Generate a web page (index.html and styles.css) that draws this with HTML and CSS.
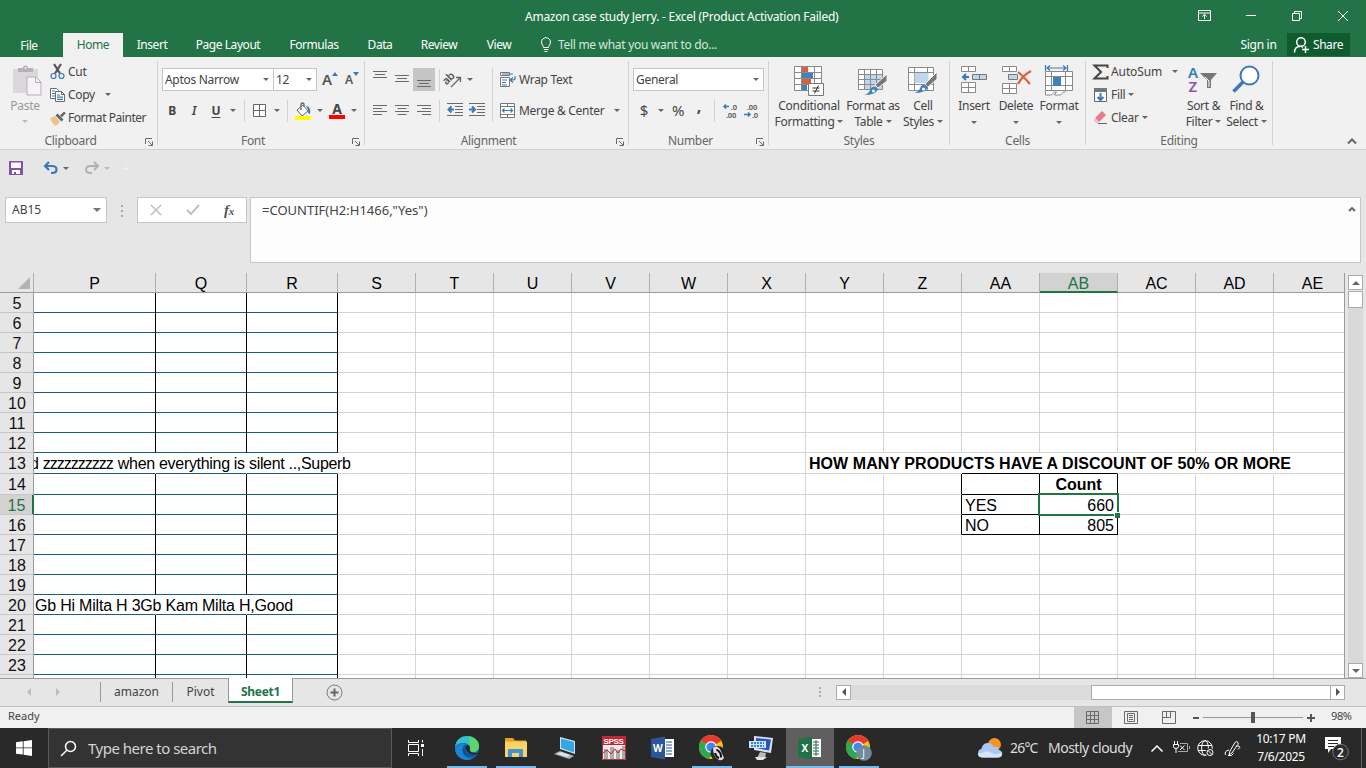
FILE: index.html
```html
<!DOCTYPE html>
<html lang="en">
<head>
<meta charset="utf-8">
<title>Amazon case study Jerry. - Excel</title>
<link rel="stylesheet" href="styles.css">
</head>
<body>
<header class="titlebar">
  <div class="doc-title">Amazon case study Jerry. - Excel (Product Activation Failed)</div>
  <div class="win-buttons">
    <svg width="14" height="12" viewBox="0 0 14 12"><path d="M.5.5h12v10H.5zM.5 3h12M6.500 9V4.500M4.200 6.500l2.300-2.200 2.300 2.200" class="ln-white"/></svg>
    <svg width="12" height="12" viewBox="0 0 12 12"><path d="M0 5.500h10" class="ln-white"/></svg>
    <svg width="12" height="12" viewBox="0 0 12 12"><path d="M1.500 3.500h7v7h-7zM3.500 3.500v-2h7v7h-2" class="ln-white"/></svg>
    <svg width="12" height="12" viewBox="0 0 12 12"><path d="M1 1l10 10M11 1L1 11" class="ln-white"/></svg>
  </div>
</header>
<nav class="tabs">
  <span class="t-file">File</span><span class="t-home">Home</span><span class="t-insert">Insert</span><span class="t-page">Page Layout</span><span class="t-formulas">Formulas</span><span class="t-data">Data</span><span class="t-review">Review</span><span class="t-view">View</span>
  <svg class="bulb" width="12" height="16" viewBox="0 0 12 16"><path d="M3.500 10.500C3.500 8.500 1.500 8 1.500 5a4.500 4.300 0 0 1 9 0c0 3-2 3.500-2 5.500zM3.800 12.500h4.500M4.500 14.500h3" class="ln-white"/></svg>
  <span class="tell">Tell me what you want to do...</span>
  <span class="signin">Sign in</span>
  <span class="share"><svg width="17" height="18" viewBox="0 0 17 18"><path d="M1.500 16.500c0-4 2.500-6 5.500-6M8 10.500c1 0 1.500.3 2 .8" class="ln-white w15"/><circle cx="8" cy="6" r="4.300" class="ln-white w15"/><path d="M12.500 10v7M9 13.500h7" class="ln-white w15"/></svg>Share</span>
</nav>

<section class="ribbon">
  <div class="group g-clip">
    <div class="body">
      <div class="paste">
        <svg width="30" height="31" viewBox="0 0 30 31"><path d="M1 4h25v24H1z" fill="#dcd7dc"/><path d="M6 7V3h5a2.500 2.500 0 0 1 5 0h5v4z" fill="#b3b3b3"/><circle cx="13.500" cy="3" r="1" fill="#f1f1f1"/><path d="M15 12h9l5 5v13H15z" fill="#f6f2f8" stroke="#b3b3b3"/><path d="M23.500 12v5.500H29" fill="none" stroke="#b3b3b3"/></svg>
        <span class="dim">Paste</span><i class="dd light"></i>
      </div>
      <div class="clip-list">
        <div><svg width="16" height="16" viewBox="0 0 16 16"><path d="M4 0l6 9.500M11 0L5 9.500" stroke="#555" stroke-width="2.200"/><circle cx="3.500" cy="12" r="2.500" class="ln-blue"/><circle cx="11.500" cy="12" r="2.500" class="ln-blue"/></svg><span>Cut</span></div>
        <div><svg width="16" height="16" viewBox="0 0 16 16"><path d="M.5 1.500h6l2 2v8h-8z" fill="#fff" stroke="#6a6a6a"/><path d="M2 4h3M2 6.500h3M2 9h3" class="ln-blue"/><path d="M5.500 4.500h6l3 3v7h-9z" fill="#fff" stroke="#6a6a6a"/><path d="M11.500 4.500v3h3" fill="none" stroke="#6a6a6a"/><path d="M7 8h3M7 10.200h6M7 12.400h6" class="ln-blue"/></svg><span>Copy</span><i class="dd gap10"></i></div>
        <div><svg width="16" height="16" viewBox="0 0 16 16"><path d="M0 8l5-2 5 6-4 4q-4-2-6-8z" fill="#edc487"/><path d="M5.500 5.500l2-2 6 6-2 2z" fill="#666"/><path d="M10 5.500l4-4 1.800 1.800-4 4z" fill="#666"/></svg><span class="tight">Format Painter</span></div>
      </div>
    </div>
    <div class="label"><span>Clipboard</span><svg class="launch" width="9" height="9" viewBox="0 0 9 9"><path d="M.5 6V.5H7M3 3l4 4M7.500 3.500v4h-4" class="ln-gray"/></svg></div>
  </div>
  <i class="sep"></i>
  <div class="group g-font">
    <div class="body rows">
      <div class="font-top">
        <span class="combo">Aptos Narrow<i class="dd"></i></span><span class="combo second">12<i class="dd"></i></span>
        <span class="grow">A<svg width="6" height="4" viewBox="0 0 6 4"><path d="M0 4l3-4 3 4z" fill="#3c78b8"/></svg></span>
        <span class="shrink">A<svg width="6" height="4" viewBox="0 0 6 4"><path d="M0 0l3 4 3-4z" fill="#3c78b8"/></svg></span>
      </div>
      <div class="font-bot">
        <b>B</b><b class="ital">I</b><b class="und">U</b><i class="dd"></i><i class="vs"></i>
        <svg width="14" height="14" viewBox="0 0 14 14"><path d="M.5.5h12v12H.5zM6.500.5v12M.5 6.500h12" fill="#fff" stroke="#666"/></svg><i class="dd"></i><i class="vs"></i>
        <svg width="18" height="18" viewBox="0 0 18 18"><path d="M3 8l6-5 5 6-6 5z" fill="#fff" stroke="#666"/><path d="M7 8V2q1.500-2 3 0v3" fill="none" stroke="#666" stroke-width="1.300"/><path d="M12 4q5 0 4 8l-2-1q1-3-2-7" fill="#3c78b8"/><path d="M1 14h16v4H1z" fill="#ff0"/></svg><i class="dd"></i>
        <span class="fcolor"><b>A</b></span><i class="dd"></i>
      </div>
    </div>
    <div class="label"><span>Font</span><svg class="launch" width="9" height="9" viewBox="0 0 9 9"><path d="M.5 6V.5H7M3 3l4 4M7.500 3.500v4h-4" class="ln-gray"/></svg></div>
  </div>
  <i class="sep"></i>
  <div class="group g-align">
    <div class="body">
      <div class="align-left">
        <div class="align-row">
          <svg width="22" height="23" viewBox="0 0 22 23"><path d="M4 3.500h14M6 6.500h10M4 9.500h14" class="ln-gray"/></svg>
          <svg width="22" height="23" viewBox="0 0 22 23"><path d="M4 7.500h14M6 10.500h10M4 13.500h14" class="ln-gray"/></svg>
          <svg width="22" height="23" viewBox="0 0 22 23"><path fill="#c5c5c5" d="M0 0h22v23H0z"/><path d="M4 12.500h14M6 15.500h10M4 18.500h14" class="ln-gray"/></svg>
          <i class="vs"></i>
          <svg width="20" height="20" viewBox="0 0 20 20"><text x="1" y="12" transform="rotate(-45 6 12)" class="ab">ab</text><path d="M7 17l9-9M12 7.500h4.500V12" fill="none" stroke="#666" stroke-width="1.300"/></svg><i class="dd"></i>
        </div>
        <div class="align-row">
          <svg width="22" height="23" viewBox="0 0 22 23"><path d="M4 6.500h14M4 9.500h9M4 12.500h14M4 15.500h9" class="ln-gray"/></svg>
          <svg width="22" height="23" viewBox="0 0 22 23"><path d="M4 6.500h14M6.500 9.500h9M4 12.500h14M6.500 15.500h9" class="ln-gray"/></svg>
          <svg width="22" height="23" viewBox="0 0 22 23"><path d="M4 6.500h14M9 9.500h9M4 12.500h14M9 15.500h9" class="ln-gray"/></svg>
          <i class="vs"></i>
          <svg width="22" height="23" viewBox="0 0 22 23"><path d="M4 4.500h16M12 7.500h8M12 10.500h8M12 13.500h8M4 16.500h16" class="ln-gray"/><path d="M11 10.500H6M8.500 7.500l-3 3 3 3" class="ln-blue w2"/></svg>
          <svg width="22" height="23" viewBox="0 0 22 23"><path d="M4 4.500h16M12 7.500h8M12 10.500h8M12 13.500h8M4 16.500h16" class="ln-gray"/><path d="M4 10.500h5M7 7.500l3 3-3 3" class="ln-blue w2"/></svg>
        </div>
      </div>
      <i class="tall"></i>
      <div class="align-right">
        <div><svg width="17" height="17" viewBox="0 0 17 17"><path d="M1.500 1.500h9v3h-9zM1.500 6.500h9v9h-9z" fill="#fff" stroke="#777"/><path d="M3 9h5M3 11.500h4M3 14h5M3 3h11M16 5v3q0 1-4 1M14 6.500l-3 2.500 3 2.500" class="ln-blue"/></svg><span>Wrap Text</span></div>
        <div><svg width="17" height="17" viewBox="0 0 17 17"><path d="M1.500 1.500h14v14h-14zM1.500 4.500h14M1.500 12.500h14M8.500 1.500v3M8.500 12.500v3" fill="#fff" stroke="#777"/><path d="M3.500 8.500h10M5.500 6.500l-2 2 2 2M11.500 6.500l2 2-2 2" class="ln-blue"/></svg><span>Merge &amp; Center</span><i class="dd gap10"></i></div>
      </div>
    </div>
    <div class="label"><span>Alignment</span><svg class="launch" width="9" height="9" viewBox="0 0 9 9"><path d="M.5 6V.5H7M3 3l4 4M7.500 3.500v4h-4" class="ln-gray"/></svg></div>
  </div>
  <i class="sep"></i>
  <div class="group g-num">
    <div class="body rows">
      <span class="combo">General<i class="dd"></i></span>
      <div class="num-bot">
        <span>$</span><i class="dd"></i><span>%</span><span class="comma">,</span><i class="vs"></i>
        <svg width="18" height="18" viewBox="0 0 18 18"><path d="M7 4.500H2M4 2.500l-2 2 2 2" class="ln-blue w15"/><text x="9" y="8" class="dec">.0</text><text x="4" y="16" class="dec">.00</text></svg>
        <svg width="18" height="18" viewBox="0 0 18 18"><text x="4" y="8" class="dec">.00</text><text x="9" y="16" class="dec">.0</text><path d="M1 12.500h6M5 10.500l2 2-2 2" class="ln-blue w15"/></svg>
      </div>
    </div>
    <div class="label"><span>Number</span><svg class="launch" width="9" height="9" viewBox="0 0 9 9"><path d="M.5 6V.5H7M3 3l4 4M7.500 3.500v4h-4" class="ln-gray"/></svg></div>
  </div>
  <i class="sep"></i>
  <div class="group g-styles">
    <div class="body big">
      <div><svg width="30" height="31" viewBox="0 0 30 31"><path d="M1 1.500h26v24H1z" fill="#fff"/><path d="M8 2h6v5H8zM8 14h9v5H8z" fill="#d9603b"/><path d="M8 8h11v5H8zM8 20h5v5H8z" fill="#4380bd"/><path d="M.5 1.500h27v24H.5zM.5 7.500h27M.5 13.500h27M.5 19.500h27M7.500 1v25M20.500 1v25" class="ln-g2"/><path d="M14.500 18.500h15v12h-15z" fill="#fff" stroke="#777"/><path d="M18.500 23h7M18.500 26h7M24.500 20.500l-4 8" stroke="#333"/></svg><span>Conditional</span><span>Formatting<i class="dd"></i></span></div>
      <div><svg width="30" height="31" viewBox="0 0 30 31"><path d="M1 4h24v20H1z" fill="#fff"/><path d="M7 9h18v15H7z" fill="#c1d5ec"/><path d="M.5 4.500h24v20H.5zM.5 9.500h24M.5 14.500h24M.5 19.500h24M6.500 4v20M12.500 4v20M18.500 4v20" class="ln-g2"/><path d="M29 9v7l-9 7-3-3z" fill="#777" stroke="#f1f1f1"/><path d="M13 23q4-3 7 1-2 6-14 6 5-1 7-7" fill="#4380bd"/><circle cx="15.500" cy="26" r="1.500" fill="#fff"/></svg><span>Format as</span><span>Table<i class="dd"></i></span></div>
      <div><svg width="30" height="31" viewBox="0 0 30 31"><path d="M.5 2.500h25v23H.5zM.5 7.500h25M.5 19.500h25M6.500 2v23M19.500 2v23" fill="#fff" class="ln-g2w"/><path d="M6.500 8h14v10h-14z" fill="#c1d5ec"/><path d="M29 7v7l-9 8-3-3z" fill="#777" stroke="#f1f1f1"/><path d="M13 21q4-3 7 1-2 6-14 6 5-1 7-7" fill="#4380bd"/><circle cx="15.500" cy="24" r="1.500" fill="#fff"/></svg><span>Cell</span><span>Styles<i class="dd"></i></span></div>
    </div>
    <div class="label"><span>Styles</span></div>
  </div>
  <i class="sep"></i>
  <div class="group g-cells">
    <div class="body big">
      <div><svg width="30" height="31" viewBox="0 0 30 31"><path d="M2.500 1.500h14v5h-14zM9.500 1.500v5M2.500 17.500h14v10h-14zM2.500 22.500h14M9.500 17.500v10" fill="#fff" class="ln-g2w"/><path d="M13.500 9.500h14v5h-14zM20.500 9.500v5" fill="#c1d5ec" stroke="#777"/><path d="M10 12H4M7 9l-3 3 3 3" class="ln-blue w2"/></svg><span>Insert</span><i class="dd"></i></div>
      <div><svg width="30" height="31" viewBox="0 0 30 31"><path d="M1.500 1.500h14v5h-14zM8.500 1.500v5M1.500 18.500h14v10h-14zM1.500 23.500h14M8.500 18.500v10" fill="#fff" class="ln-g2w"/><path d="M7.500 9.500h9v5h-9z" fill="#c1d5ec" stroke="#777"/><path d="M17 7q5 4 12 12M30 6Q22 10 17 19" fill="none" stroke="#d9603b" stroke-width="2.200"/></svg><span>Delete</span><i class="dd"></i></div>
      <div><svg width="30" height="31" viewBox="0 0 30 31"><path d="M1.500 0v6M23.500 0v6M3 3h19M6 .5L3 3l3 2.500M19 .5L22 3l-3 2.500" class="ln-blue"/><path d="M1.500 6.500h27v19h-27zM1.500 11.500h27M1.500 20.500h27M7.500 6v20M21.500 6v20" fill="#fff" class="ln-g2w"/><path d="M9 12h8v9H9z" fill="#4380bd"/><path d="M1.500 26v4h6l3-3h2l-2 3h6l3-3h2" fill="#fff" class="ln-g2w"/></svg><span>Format</span><i class="dd"></i></div>
    </div>
    <div class="label"><span>Cells</span></div>
  </div>
  <i class="sep"></i>
  <div class="group g-edit">
    <div class="body">
      <div class="edit-list">
        <div><svg width="16" height="16" viewBox="0 0 16 16"><path d="M14.500 4V1.500h-13L8 8l-6.500 6.500h13V12" fill="none" stroke="#444" stroke-width="2"/></svg><span class="wide-text">AutoSum</span><i class="dd gap10"></i></div>
        <div><svg width="16" height="16" viewBox="0 0 16 16"><path d="M1.500 1.500h12v13h-12z" fill="#fff" stroke="#666"/><path d="M1 1h13v4H1z" fill="#777"/><path d="M7.500 6v7M4.500 10l3 3 3-3" class="ln-blue w2"/></svg><span>Fill</span><i class="dd gap3"></i></div>
        <div><svg width="16" height="16" viewBox="0 0 16 16"><path d="M2 8l7-7 4 4-7 7z" fill="#e8798f"/><path d="M1.500 8.500l4 4-1.500 1-3-3z" fill="#f3b3bf"/><path d="M5 13.500h9" stroke="#666"/></svg><span>Clear</span><i class="dd gap3"></i></div>
      </div>
      <div class="big">
        <div><svg width="30" height="31" viewBox="0 0 30 31"><text x="0" y="12.500" class="az" fill="#3c78b8">A</text><text x=".5" y="27" class="az" fill="#8a55ad">Z</text><path d="M12 8h17l-6 7v8h-4v-8z" fill="#777"/><path d="M17 12l4 4v6" fill="none" stroke="#fff"/></svg><span>Sort &amp;</span><span>Filter<i class="dd"></i></span></div>
        <div><svg width="30" height="31" viewBox="0 0 30 31"><circle cx="18.500" cy="10.500" r="9" fill="#fff" stroke="#3c78b8" stroke-width="2"/><path d="M12 17L2.500 26.500" stroke="#3c78b8" stroke-width="3.500"/></svg><span>Find &amp;</span><span>Select<i class="dd"></i></span></div>
      </div>
    </div>
    <div class="label"><span>Editing</span></div>
  </div>
  <i class="sep"></i>
  <svg class="collapse" width="10" height="7" viewBox="0 0 10 7"><path d="M1 5.500l4-4 4 4" fill="none" stroke="#666" stroke-width="2"/></svg>
</section>

<div class="qat">
  <svg width="14" height="14" viewBox="0 0 14 14"><path d="M0 0h14v14H0z" fill="#8551a9"/><path d="M2 1.500h10V7H2zM3 9h8v4H3z" fill="#fff"/><path d="M5 11h2v3H5z" fill="#8551a9"/></svg>
  <svg class="undo" width="16" height="14" viewBox="0 0 16 14"><path d="M2 5h7q4.500 0 4.500 3.500T9 12H8M6 1L2 5l4 4" fill="none" stroke="#3c78b8" stroke-width="2.200"/></svg><i class="dd"></i>
  <svg class="redo" width="16" height="14" viewBox="0 0 16 14"><path d="M14 5H6.500Q2 5 2 8.500T6.500 12H8M10 1l4 4-4 4" fill="none" stroke="#b1b1b1" stroke-width="2"/></svg><i class="dd light"></i>
  <svg class="more" width="6" height="8" viewBox="0 0 6 8"><path d="M0 .5h6M1 4h4L3 6z" fill="#f3f3f3" stroke="#f3f3f3" stroke-width=".6"/></svg>
</div>

<div class="fbar">
  <div class="namebox"><span>AB15</span><i class="dd wide"></i></div>
  <svg class="dots" width="3" height="12" viewBox="0 0 3 12"><path d="M0 0h2v2H0zM0 5h2v2H0zM0 10h2v2H0z" fill="#aaa"/></svg>
  <div class="fbtns">
    <svg width="12" height="12" viewBox="0 0 12 12"><path d="M1 1l10 10M11 1L1 11" stroke="#c3c3c3" stroke-width="1.700"/></svg>
    <svg width="14" height="12" viewBox="0 0 14 12"><path d="M1 6l4 4 8-9" fill="none" stroke="#c3c3c3" stroke-width="2.200"/></svg>
    <span class="fx">f<small>x</small></span>
  </div>
  <div class="formula"><span>=COUNTIF(H2:H1466,"Yes")</span><svg width="8" height="6" viewBox="0 0 8 6"><path d="M1 5l3-3 3 3" fill="none" stroke="#666" stroke-width="1.900"/></svg></div>
</div>

<main class="sheet">
  <div class="cells" id="cells"></div>
  <div class="vscroll">
    <span class="sbtn"><i class="tri up"></i></span><span class="vthumb"></span><span class="vtrack"></span><span class="sbtn"><i class="tri down"></i></span>
  </div>
</main>

<div class="sheetbar">
  <i class="tri left pale"></i><i class="tri right pale"></i>
  <span class="stab s-amazon">amazon</span><span class="stab s-pivot">Pivot</span><span class="stab s-sheet">Sheet1</span>
  <svg class="add" width="17" height="17" viewBox="0 0 17 17"><circle cx="8.500" cy="8.500" r="7.500" fill="none" stroke="#777"/><path d="M8.500 4.500v8M4.500 8.500h8" stroke="#666" stroke-width="2"/></svg>
  <svg class="dots2" width="3" height="10" viewBox="0 0 3 10"><path d="M0 0h2v2H0zM0 4h2v2H0zM0 8h2v2H0z" fill="#aaa"/></svg>
  <div class="hscroll"><span class="sbtn"><i class="tri left"></i></span><span class="htrack"></span><span class="hthumb"></span><span class="sbtn"><i class="tri right"></i></span></div>
</div>

<footer class="status">
  <span class="ready">Ready</span>
  <span class="view on"><svg width="14" height="14" viewBox="0 0 14 14"><path d="M.5.5h12v12H.5zM4.500.5v12M8.500.5v12M.5 4.500h12M.5 8.500h12" class="ln-gray"/></svg></span>
  <span class="view"><svg width="15" height="14" viewBox="0 0 15 14"><path d="M.5.5h13v12H.5zM3.500 2.500h7v8h-7zM5 4.500h4M5 6.500h4M5 8.500h4" class="ln-gray"/></svg></span>
  <span class="view"><svg width="15" height="14" viewBox="0 0 15 14"><path d="M.5.5h13v12H.5zM4.500.5v6M8.500.5v6h-8M8.500 6.500v-6" class="ln-gray"/></svg></span>
  <svg class="zoom" width="124" height="12" viewBox="0 0 124 12"><path d="M0 5h6v2H0zM114 5h8v2h-8zM117 2h2v8h-2z" fill="#555"/><path d="M10 5.500h100" stroke="#999"/><path d="M58 0h4v11h-4z" fill="#555"/></svg>
  <span class="pct">98%</span>
</footer>

<div class="taskbar">
  <div class="start"><svg width="16" height="16" viewBox="0 0 16 16"><path d="M0 2.200L6.800 1.300V7.500H0zM7.600 1.200L16 0v7.500H7.600zM0 8.300h6.800v6.300L0 13.700zM7.600 8.300H16V16l-8.400-1.200z" fill="#fff"/></svg></div>
  <div class="search"><svg width="17" height="17" viewBox="0 0 17 17"><circle cx="10.500" cy="6.500" r="5" class="ln-white w15"/><path d="M7 10l-6 6" class="ln-white w15"/></svg><span>Type here to search</span></div>
  <div class="task"><svg width="18" height="18" viewBox="0 0 18 18"><path d="M1.500 1v2.500h10V1M1.500 17v-2.500h10V17M1.500 5.500h10v7h-10zM15.500 1v2.500M15.500 10v7" class="ln-white"/><path d="M14 5h3v3h-3z" fill="#fff"/></svg></div>
  <div class="apps">
    <div class="run"><svg width="26" height="26" viewBox="0 0 26 26"><circle cx="13" cy="13" r="12" fill="#0f6cbd"/><path d="M1 12C2 4 8 1 13 1c7 0 12 5 12 10 0 4-3 6-6 6-4 0-3-2-3-4 0-3-3-5-7-5-4 0-7 2-8 4z" fill="#35c1c9"/><path d="M15 1.200c6 .8 10 5 10 9.800 0 4-3 6-6 6-3 0-4-1.500-3-3z" fill="#5cd56b"/><path d="M9 11c-3 5 1 12 8 13.300C9 27 1 21 1 13c2-4 6-5 10-4z" fill="#1b86d4"/><path d="M11 11c-2 6 4 11 12 8-3 3-8 4-11 2-4-2-4-8-1-10z" fill="#124f93"/><path d="M11 12q3-4 5 0-1 3 1 5 2 1.500 8 .5-3 3-7 2-6-1.500-7-7.500" fill="#26282c"/></svg></div>
    <div class="run"><svg width="26" height="26" viewBox="0 0 26 26"><path d="M2 3h8l2 2.500h11V22H2z" fill="#e8a01c"/><path d="M2 6.500h22V22H2z" fill="#fcd462"/><path d="M5 22v-7q0-1 1-1h13q1 0 1 1v7h-4v-4h-7v4z" fill="#3f95d6"/></svg></div>
    <div><svg width="26" height="26" viewBox="0 0 26 26"><path d="M8 2l15 4v13L8 14z" fill="#c9e4f4"/><path d="M9 3.500l13 3.500v10.500L9 13z" fill="#36a5e4"/><path d="M2 19l6-3 14 5-5 3z" fill="#aab2b8"/><path d="M5 19l4-2 9 3-3 2z" fill="#dfe3e6"/></svg></div>
    <div><svg width="26" height="26" viewBox="0 0 26 26"><path d="M1 1h24v24H1z" fill="#eee"/><path d="M1 1h24v9H1z" fill="#c8202f"/><text x="2.500" y="8.700" class="spss">SPSS</text><path d="M3 14h4v10H3zM9 12h4v12H9zM15 15h4v9h-4zM21 11h3v13h-3z" fill="#aaa"/><path d="M2 18l4-3 4 4 4-5 3 4 3-4 4 2" fill="none" stroke="#c8202f"/><path d="M1.500 1.500h23v23h-23z" fill="none" stroke="#b9303c"/></svg></div>
    <div><svg width="26" height="26" viewBox="0 0 26 26"><path d="M12 4h12v18H12z" fill="#fff"/><path d="M16 7h6M16 10h6M16 13h6M16 16h6M16 19h6" stroke="#2b579a"/><path d="M1 4l14-2.500v23L1 22z" fill="#2b579a"/><text x="3" y="17" class="app-letter">W</text></svg></div>
    <div class="run"><svg width="28" height="28" viewBox="0 0 28 28"><circle cx="13" cy="13" r="12" fill="#fbc116"/><path d="M13 13L2.600 7A12 12 0 0 1 23.400 7z" fill="#e33b2e"/><path d="M13 13L2.600 7a12 12 0 0 0 8.500 17.800L16 17z" fill="#2da94f"/><circle cx="13" cy="13" r="5.800" fill="#fff"/><circle cx="13" cy="13" r="4.600" fill="#4285f4"/><circle cx="20" cy="19.500" r="7.500" fill="#272727"/><path d="M15 14q4-3 7 1l4 9q-2 3-5 2-6-3-6-12z" fill="#ddd"/><path d="M18.500 15.500q5 3 4.500 8M17 19q1 4 4 5" stroke="#111" stroke-width="2" fill="none"/></svg></div>
    <div><svg width="26" height="26" viewBox="0 0 26 26"><path d="M6 1l19 2-2 15-17-3z" fill="#dce3ee"/><path d="M8 3l15 1.500-2 11L8 13z" fill="#2456c6"/><path d="M1 6h17v7H1z" fill="#d5e5f8"/><path d="M3 8h13M3 11h13" stroke="#3482d7" stroke-width="2" stroke-dasharray="2 1"/><path d="M12 17l6 1-1 5H9z" fill="#b6bbc2"/><path d="M7 22h12l-4 3H9z" fill="#e4e4e4"/></svg></div>
    <div class="run focused"><svg width="26" height="26" viewBox="0 0 26 26"><path d="M12 4h12v18H12z" fill="#fff"/><path d="M16 7h6M16 10h6M16 13h6M16 16h6M16 19h6M19 5v16" stroke="#217346"/><path d="M1 4l14-2.500v23L1 22z" fill="#217346"/><text x="4.500" y="17" class="app-letter">X</text></svg></div>
    <div class="run"><svg width="28" height="28" viewBox="0 0 28 28"><circle cx="13" cy="13" r="12" fill="#fbc116"/><path d="M13 13L2.600 7A12 12 0 0 1 23.400 7z" fill="#e33b2e"/><path d="M13 13L2.600 7a12 12 0 0 0 8.500 17.800L16 17z" fill="#2da94f"/><circle cx="13" cy="13" r="5.800" fill="#fff"/><circle cx="13" cy="13" r="4.600" fill="#4285f4"/><circle cx="19" cy="19" r="7.800" fill="#6f8a9b"/><text x="17.300" y="22.500" class="badge-j">J</text></svg></div>
  </div>
  <div class="tray">
    <svg width="26" height="22" viewBox="0 0 26 22"><circle cx="17.500" cy="7.500" r="6.500" fill="#f59423"/><path d="M5 20.500a4.500 4.500 0 0 1-.5-8.800Q5.500 6 11 6q4 0 5.500 4Q21 8.500 22 13q3 .5 3 4t-4 3.500z" fill="#a9c8f5"/><path d="M5 20.500Q.5 20 1 16q3 1 6-1t8 1 10-1q1 5-4 5.500z" fill="#d5e4fb"/></svg>
    <span class="temp">26°C</span><span class="wx">Mostly cloudy</span>
    <svg class="chev" width="14" height="9" viewBox="0 0 14 9"><path d="M1.500 7.500L7 2l5.500 5.500" class="ln-white w15"/></svg>
    <svg class="batt" width="17" height="12" viewBox="0 0 17 12"><path d="M7 1.500h7.500v8H5M16.500 4v3" fill="none" stroke="#aaa"/><path d="M1.500-1v3M4.500-1v3M.5 2.500h5v2q0 2-2.500 2t-2.500-2zM3 6.500V11M7 3.500l4.500 4.500M11.500 3.500L7 8" class="ln-white"/></svg>
    <svg class="globe" width="18" height="17" viewBox="0 0 18 17"><circle cx="8" cy="8" r="7.300" class="ln-white"/><ellipse cx="8" cy="8" rx="3.400" ry="7.300" class="ln-white"/><path d="M1 5.500h14M1 10.500h10" class="ln-white"/><circle cx="13" cy="12.500" r="4.500" fill="#2a2a2a"/><circle cx="13" cy="12.500" r="3" class="ln-white"/><path d="M11 10.500l4 4" class="ln-white"/></svg>
    <svg class="pen" width="18" height="17" viewBox="0 0 18 17"><path d="M6 11L11 2.500q2-2 3 0t-1 3L8 13l-3 2zM12 6h3q2 1.500-1 3.500M1.500 15q-1.500-4 3.500-5M4 15.500q4 1 5.500-2" class="ln-white"/></svg>
    <div class="clock"><span>10:17 PM</span><span>7/6/2025</span></div>
    <svg class="notif" width="26" height="26" viewBox="0 0 26 26"><path d="M1 2h16v12H7l-3 4v-4H1z" fill="#fff"/><path d="M4 5.500h10M4 8.500h10M4 11.500h6" stroke="#292929"/><circle cx="16.500" cy="17" r="7.800" fill="#2c2c2c" stroke="#777"/><text x="13" y="21.500" class="badge-2">2</text></svg>
    <i class="edge"></i>
  </div>
</div>
<script src="sheet.js"></script>
</body>
</html>
```
FILE: styles.css
```css
*, ::before, ::after { box-sizing: border-box; }
body { margin: 0; width: 1366px; height: 768px; overflow: hidden; font: 12px/16px "Noto Sans", "Open Sans", sans-serif; letter-spacing: -0.3px; color: #444; background: #e6e6e6; }
svg { display: block; flex: none; overflow: visible; }
span { white-space: nowrap; }
.ln-white { fill: none; stroke: #fff; }
.ln-gray { fill: none; stroke: #6a6a6a; }
.ln-g2 { fill: none; stroke: #8a8a8a; }
.ln-g2w { stroke: #8a8a8a; }
.ln-blue { fill: none; stroke: #3c78b8; stroke-width: 1.2; }
.w15 { stroke-width: 1.5; }
.w2 { stroke-width: 2; }
.dd { display: inline-block; flex: none; width: 0; height: 0; border: 3px solid transparent; border-top-color: #666; border-bottom: 0; }
.dd.light { border-top-color: #bbb; }
.dd.wide { border-width: 4px 4px 0; border-top-color: #777; }
.gap10 { margin-left: 10px; }
.gap3 { margin-left: 3px; }
.tight { letter-spacing: -0.45px; }
.wide-text { letter-spacing: -0.1px; }

.titlebar { height: 33px; background: #227447; color: #fff; display: flex; }
.doc-title { width: 1366px; padding: 9px 0 0 525px; white-space: nowrap; letter-spacing: -0.25px; }
.win-buttons { flex: none; width: 168px; margin-left: -168px; display: flex; justify-content: space-between; align-items: center; padding: 0 17px 2px 0; }
.tabs { height: 24px; background: #227447; color: #fff; display: flex; text-align: center; line-height: 24px; letter-spacing: -0.45px; }
.t-file { width: 58px; margin-right: 5px; padding-top: 1px; }
.t-home { width: 60px; background: #f1f1f1; color: #227447; }
.t-insert { width: 58px; }
.t-page { width: 94px; }
.t-formulas { width: 78px; }
.t-data { width: 54px; }
.t-review { width: 64px; }
.t-view { width: 56px; }
.bulb { margin: 4px 6px 0 13px; }
.tell { color: #d5e8dc; letter-spacing: -0.3px; }
.signin { margin-left: auto; width: 57px; letter-spacing: -0.3px; }
.share { width: 63px; height: 23px; background: #0f5b2f; margin-right: 16px; display: flex; align-items: center; padding-left: 6px; gap: 3px; }

.ribbon { height: 93px; background: #f1f1f1; border-bottom: 1px solid #d2d2d2; display: flex; }
.group { flex: none; display: grid; grid-template-rows: 76px 16px; }
.sep { flex: none; width: 1px; height: 84px; margin-top: 4px; background: #d2d2d2; }
.body { display: flex; }
.label { position: relative; text-align: center; color: #666; line-height: 16px; }
.launch { position: absolute; right: 3px; top: 5px; }
.g-clip { width: 157px; }
.g-font { width: 206px; }
.g-align { width: 263px; }
.g-num { width: 139px; }
.g-styles { width: 180px; }
.g-cells { width: 135px; }
.g-edit { width: 186px; }
.g-clip .label, .g-align .label, .g-num .label, .g-font .label { padding-right: 16px; }
.paste { width: 50px; display: flex; flex-direction: column; align-items: center; padding-top: 8px; }
.paste svg { margin-left: 4px; }
.paste span { margin-top: 2px; }
.paste .dd { margin-top: 6px; }
.dim { color: #999; }
.clip-list, .edit-list { padding-top: 3px; }
.clip-list div, .edit-list div { height: 23px; display: flex; align-items: center; }
.clip-list svg, .edit-list svg { margin-right: 2px; }
.rows { flex-direction: column; padding: 11px 3px 0 4px; }
.g-num .rows { padding-right: 4px; }
.g-num .combo { width: 131px; }
.combo { height: 23px; border: 1px solid #c6c6c6; background: #fff; display: flex; align-items: center; justify-content: space-between; padding: 0 4px 0 2px; }
.combo.second { margin-left: -1px; }
.font-top { display: grid; grid-template-columns: 112px 43px 22px 22px; height: 23px; }
.grow, .shrink { display: flex; align-items: flex-end; color: #555; font-weight: 600; line-height: 17px; padding-bottom: 3px; }
.grow { font-size: 15px; padding-left: 5px; }
.shrink { font-size: 12px; padding-left: 6px; }
.grow svg, .shrink svg { margin: 0 0 12px 0; }
.font-bot { display: grid; grid-template-columns: 22px 22px 22px 12px 10px 21px 13px 9px 22px 11px 24px 9px; margin: 8px 0 0 -1px; height: 23px; align-items: center; justify-items: center; }
.font-bot b { color: #444; }
.font-bot .ital { font-style: italic; font-weight: 600; }
.und { text-decoration: underline; text-underline-offset: 2px; }
.fcolor { width: 16px; height: 16px; border-bottom: 4px solid #f00; line-height: 12px; text-align: center; font-size: 14px; }
.vs { width: 1px; height: 22px; background: #d2d2d2; }
.align-left { width: 127px; padding: 11px 0 0 4px; display: grid; grid-template-rows: 31px 23px; }
.align-row { display: grid; grid-template-columns: 22px 22px 22px 8px 22px 22px; height: 23px; align-items: center; justify-items: center; }
.align-row .dd { margin-right: 12px; }
.ab { font: 600 11px "Noto Sans", sans-serif; fill: #555; }
.tall { width: 1px; height: 54px; margin-top: 11px; background: #d2d2d2; }
.align-right { padding: 11px 0 0 6px; }
.align-right div { display: flex; align-items: center; height: 23px; margin-bottom: 8px; }
.align-right svg { margin-right: 3px; }
.num-bot { display: grid; grid-template-columns: 22px 11px 24px 18px 12px 21px 22px; height: 23px; margin: 8px 0 0 0; align-items: center; justify-items: center; font-size: 15px; }
.num-bot span:not(.comma) { padding-bottom: 1px; }
.comma { font-weight: 700; font-size: 16px; line-height: 6px; padding-bottom: 10px; }
.dec { font: 600 7.5px/1 "Noto Sans", sans-serif; fill: #555; letter-spacing: -0.2px; }
.big { display: flex; }
.big > div { display: flex; flex-direction: column; align-items: center; padding-top: 8px; }
.big svg { margin-bottom: 2px; }
.big > div > .dd { margin-top: 7px; }
.big span .dd { margin: 0 0 3px 3px; }
.g-styles .big { display: grid; grid-template-columns: 68px 60px 40px; padding-left: 6px; }
.g-cells .big { display: grid; grid-template-columns: 42px 42px 44px; padding-left: 3px; }
.edit-list { width: 96px; padding-left: 7px; }
.g-edit .big { display: grid; grid-template-columns: 43px 43px; }
.g-edit .big svg { margin-left: -1px; }
.collapse { margin: 81px 0 0 74px; }

.qat { height: 47px; display: flex; align-items: center; padding: 0 0 11px 9px; }
.undo { margin: 0 4px 0 20px; }
.redo { margin: 0 4px 0 15px; }
.more { margin-left: 13px; }

.fbar { height: 76px; display: flex; align-items: flex-start; padding-left: 5px; }
.namebox { width: 102px; height: 26px; background: #fff; border: 1px solid #c6c6c6; display: flex; align-items: center; justify-content: space-between; padding: 0 5px 0 6px; }
.namebox span { letter-spacing: 0; }
.dots { margin: 8px 13px 0 14px; }
.fbtns { width: 110px; height: 26px; background: #fff; border: 1px solid #c6c6c6; display: flex; align-items: center; justify-content: space-between; padding: 0 12px; }
.fx { font: italic 700 15px/20px "Liberation Serif", serif; color: #555; }
.fx small { font-size: 11px; }
.formula { width: 1111px; height: 66px; margin-left: 3px; background: #fdfdfd; border: 1px solid #c6c6c6; display: flex; justify-content: space-between; padding: 4px 4px 0 11px; font-size: 13px; letter-spacing: 0; }
.formula svg { margin-top: 4px; }

.sheet { display: flex; height: 405px; }
.cells { width: 1345px; height: 405px; overflow: hidden; border-right: 1px solid #9b9b9b; background: #fff; font: 16px/21px "Liberation Sans", Arial, sans-serif; letter-spacing: 0; color: #000; }
.row { display: grid; grid-template-columns: 34px 122px 91px 91px repeat(12, 78px) 78px; grid-template-rows: 100%; height: 20px; }
.row.h21 { height: 21px; }
.row > div { border-right: 1px solid #d4d4d4; border-bottom: 1px solid #d4d4d4; white-space: nowrap; min-width: 0; min-height: 0; }
.row > .rh { background: #e6e6e6; border-color: #c6c6c6; border-right-color: #9b9b9b; text-align: center; color: #111; padding-left: 1px; }
.row > .rh.sel { background: #d2d2d2; color: #227447; border-right: 2px solid #227447; }
.row.head { background: #e6e6e6; }
.row.head > div { text-align: center; border-bottom-color: #9b9b9b; border-right-color: #b0b0b0; }
.row.head > .corner { display: flex; justify-content: flex-end; padding: 4px 3px 0 0; }
.row.head > .sel { background: #d2d2d2; color: #227447; border-bottom: 2px solid #227447; }
.row > .bl { border-bottom-color: #156082; border-right-color: #000; }
.row > .noline { border-right-color: transparent; }
.row > .bb { border-bottom-color: #000; }
.row > .br { border-right-color: #000; }
.row > .bold { font-weight: 700; }
.row > .center { text-align: center; }
.row > .right { text-align: right; padding-right: 3px; }
.row > .left { padding-left: 3px; }
.row > .heading { letter-spacing: 0.06px; }
.row > .flush { padding-left: 1px; letter-spacing: -0.21px; }
.row > .clip { overflow: visible; clip-path: inset(0 -300px 0 0); letter-spacing: -0.31px; }
.clip > span { margin-left: -4px; }
.clip .z { letter-spacing: -1px; margin: 0 1px 0 0; }
.row > .active { position: relative; z-index: 1; }
.active::before { content: ""; position: absolute; left: -2px; top: -2px; width: 81px; height: 23px; border: 2px solid #227447; }
.active::after { content: ""; position: absolute; right: -3px; bottom: -4px; width: 6px; height: 6px; background: #227447; border: 1px solid #fff; border-width: 1px 0 0 1px; }

.vscroll { display: flex; flex-direction: column; width: 15px; margin: 2px 0 0 3px; }
.sbtn { flex: none; width: 15px; height: 15px; background: #fff; border: 1px solid #ababab; display: flex; align-items: center; justify-content: center; }
.vthumb { height: 17px; margin-top: 1px; background: #fff; border: 1px solid #ababab; }
.vtrack { flex: 1; background: #d9d9d9; }
.tri { width: 0; height: 0; border: 4px solid transparent; }
.up { border-top: 0; border-bottom-color: #666; }
.down { border-bottom: 0; border-top-color: #666; }
.tri.left { border-left: 0; border-right-color: #555; padding: 0; }
.tri.right { border-right: 0; border-left-color: #555; }
.tri.pale.left { border-right-color: #bcbcbc; margin-left: 27px; }
.tri.pale.right { border-left-color: #bcbcbc; margin: 0 40px 0 25px; }

.sheetbar { height: 29px; border-top: 1px solid #9b9b9b; border-bottom: 1px solid #bfbfbf; display: flex; align-items: center; padding-bottom: 1px; }
.stab { height: 20px; border-left: 1px solid #999; text-align: center; line-height: 19px; letter-spacing: 0; }
.s-amazon { width: 72px; }
.s-pivot { width: 56px; }
.s-sheet { width: 65px; height: 25px; align-self: flex-start; margin-top: -1px; background: #fff; border-right: 1px solid #999; border-bottom: 2px solid #227447; color: #227447; font-weight: 700; line-height: 27px; letter-spacing: -0.3px; }
.add { margin-left: 33px; }
.dots2 { margin-left: 476px; }
.hscroll { display: flex; margin-left: 14px; width: 509px; height: 15px; background: #dbdbdb; }
.htrack { width: 240px; }
.hthumb { flex: 1; background: #fff; border: 1px solid #ababab; border-right: 0; }

.status { height: 21px; background: #f0f0f0; display: flex; align-items: center; font-size: 11px; }
.ready { width: 1066px; margin-left: 8px; padding-bottom: 3px; letter-spacing: 0; }
.view { flex: none; width: 38px; height: 21px; display: flex; align-items: center; justify-content: center; }
.on { background: #c6c6c6; }
.zoom { margin-left: 5px; }
.pct { margin: 0 0 3px 14px; letter-spacing: -0.4px; }

.taskbar { height: 40px; background: #292929; color: #fff; display: flex; align-items: stretch; letter-spacing: 0; }
.start { width: 48px; display: flex; align-items: center; justify-content: center; }
.search { width: 344px; background: #333; border: 1px solid #5a5a5a; display: flex; align-items: center; padding-left: 11px; gap: 11px; font-size: 15px; color: #d4d4d4; letter-spacing: -0.5px; }
.task { width: 48px; display: flex; align-items: center; justify-content: center; }
.apps { display: flex; gap: 1px; margin-left: 3px; }
.apps div { width: 48px; display: flex; align-items: center; justify-content: center; }
.run { background: linear-gradient(#76b9ed, #76b9ed) center bottom / 40px 2px no-repeat; }
.run.focused { background: linear-gradient(#76b9ed, #76b9ed) center bottom / 48px 2px no-repeat #5f5f5f; }
.app-letter { font: 700 10px "Open Sans", sans-serif; fill: #fff; }
.spss { font: 700 8px "Liberation Sans", sans-serif; fill: #fff; letter-spacing: -0.3px; }
.az { font: 600 15px/1 "Noto Sans", sans-serif; }
.badge-j { font: 10px "Open Sans", sans-serif; fill: #fff; }
.badge-2 { font: 600 12px "Open Sans", sans-serif; fill: #fff; }
.tray { flex: 1; display: flex; align-items: center; padding-left: 94px; }
.temp { width: 38px; margin-left: 7px; font-size: 14px; color: #ddd; letter-spacing: -0.8px; }
.wx { width: 85px; font-size: 14px; color: #ddd; letter-spacing: -0.5px; }
.chev { margin-left: 17px; }
.batt { margin-left: 9px; }
.globe { margin-left: 7px; }
.pen { margin-left: 9px; }
.clock { width: 60px; margin-left: 9px; display: grid; grid-template-rows: 18px 18px; justify-items: center; line-height: 18px; letter-spacing: -0.3px; }
.notif { margin: 0 0 0 13px; }
.edge { width: 1px; height: 40px; margin-left: 11px; background: #666; }
```
FILE: sheet.js
```js
const columns = ["P","Q","R","S","T","U","V","W","X","Y","Z","AA","AB","AC","AD","AE"];

// Cell contents and extra classes, keyed by cell reference
const data = {
  P13: ['<span>d <span class="z">zzzzzzzzzz</span> when everything is silent ..,Superb</span>', "noline clip"],
  Q13: ["", "noline"], R13: ["", "noline"],
  P20: ["Gb Hi Milta H 3Gb Kam Milta H,Good", "noline flush"],
  Q20: ["", "noline"],
  Y13: ["HOW MANY PRODUCTS HAVE A DISCOUNT OF 50% OR MORE", "noline left bold heading"],
  Z13: ["", "noline"], AA13: ["", "noline bb"], AB13: ["", "noline bb"],
  AC13: ["", "noline"], AD13: ["", "noline"],
  Z14: ["", "br"], Z15: ["", "br"], Z16: ["", "br"],
  AA14: ["", "br bb"], AB14: ["Count", "br bb bold center"],
  AA15: ["YES", "br bb left"], AB15: ["660", "br bb right active"],
  AA16: ["NO", "br bb left"], AB16: ["805", "br bb right"]
};

let html = '<div class="row head"><div class="corner"><svg width="12" height="12" viewBox="0 0 12 12"><path d="M12 0v12H0z" fill="#b4b4b4"/></svg></div>';
html += columns.map(c => `<div class="${c === "AB" ? "sel" : ""}">${c}</div>`).join("") + "</div>";
for (let r = 5; r <= 24; r++) {
  html += `<div class="row${r === 13 || r === 14 ? " h21" : ""}"><div class="rh${r === 15 ? " sel" : ""}">${r < 24 ? r : ""}</div>`;
  for (const c of columns) {
    const [text, cls] = data[c + r] || ["", ""];
    html += `<div class="${"PQR".includes(c) ? "bl " : ""}${cls}">${text}</div>`;
  }
  html += "</div>";
}
document.getElementById("cells").innerHTML = html;
```
